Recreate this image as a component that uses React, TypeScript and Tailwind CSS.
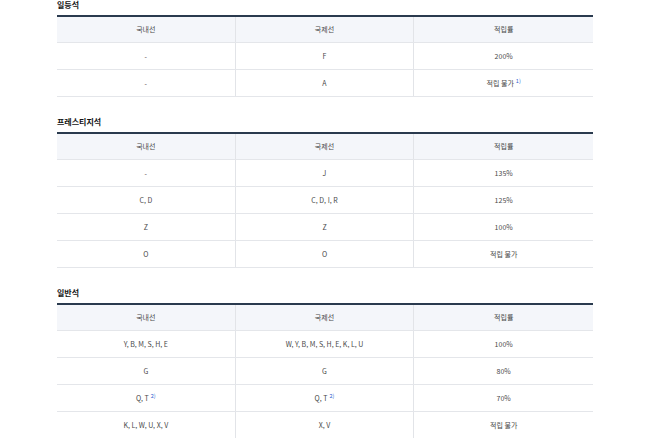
import React from "react";

type Cell = { text: string; note?: string };
type Section = { title: string; rows: Cell[][] };

const c = (text: string, note?: string): Cell => ({ text, note });

const sections: Section[] = [
  {
    title: "일등석",
    rows: [
      [c("-"), c("F"), c("200%")],
      [c("-"), c("A"), c("적립 불가", "1)")],
    ],
  },
  {
    title: "프레스티지석",
    rows: [
      [c("-"), c("J"), c("135%")],
      [c("C, D"), c("C, D, I, R"), c("125%")],
      [c("Z"), c("Z"), c("100%")],
      [c("O"), c("O"), c("적립 불가")],
    ],
  },
  {
    title: "일반석",
    rows: [
      [c("Y, B, M, S, H, E"), c("W, Y, B, M, S, H, E, K, L, U"), c("100%")],
      [c("G"), c("G"), c("80%")],
      [c("Q, T", "2)"), c("Q, T", "2)"), c("70%")],
      [c("K, L, W, U, X, V"), c("X, V"), c("적립 불가")],
    ],
  },
];

const headers = ["국내선", "국제선", "적립률"];

function Row({ cells, head }: { cells: Cell[]; head?: boolean }) {
  return (
    <div
      className={`grid grid-cols-3 border-b border-[#e4e6ea] ${
        head ? "h-[26px] bg-[#f4f6fa]" : "h-[27px] bg-white"
      }`}
    >
      {cells.map((cell, i) => (
        <div
          key={i}
          className={`flex items-center justify-center text-[7px] text-[#4a4a4a] ${
            i < 2 ? "border-r border-[#e2e4e8]" : ""
          }`}
        >
          {cell.text}
          {cell.note && (
            <sup className="ml-[2px] text-[5.5px] text-[#2f5fd0] -top-[2px]">{cell.note}</sup>
          )}
        </div>
      ))}
    </div>
  );
}

export default function App() {
  return (
    <div className="w-[658px] h-[438px] overflow-hidden bg-white font-['Noto_Sans_CJK_KR',sans-serif]">
      <div className="pl-[57px] w-[593px]">
        {sections.map(s => (
          <div key={s.title} className="mb-[20px]">
            <h2 className="text-[8px] leading-[10px] font-bold text-[#111] mb-[5px]">{s.title}</h2>
            <div className="border-t-2 border-[#2a3a4e]">
              <Row head cells={headers.map(h => c(h))} />
              {s.rows.map((r, i) => (
                <Row key={i} cells={r} />
              ))}
            </div>
          </div>
        ))}
      </div>
    </div>
  );
}
